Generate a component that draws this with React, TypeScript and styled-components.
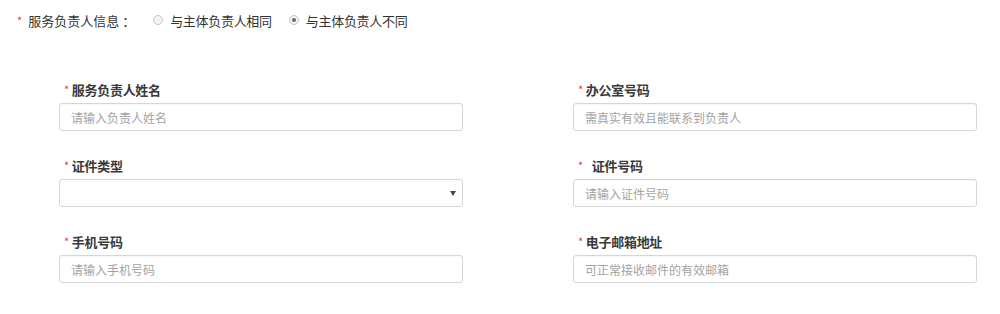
import React from "react";
import styled, { createGlobalStyle } from "styled-components";

const Global = createGlobalStyle`
  html, body { margin: 0; padding: 0; background: #fff; }
  body { font-family: "Noto Sans CJK SC", "Noto Sans", sans-serif; color: #333; }
  * { box-sizing: border-box; }
`;

const Page = styled.div`
  width: 1000px;
  height: 314px;
  background: #fff;
  overflow: hidden;
`;

const Header = styled.div`
  display: flex;
  align-items: center;
  height: 40px;
  padding-left: 17px;
  font-size: 13px;
  color: #333;
`;

const Star = styled.span<{ $gap?: number }>`
  color: #e4393c;
  font-size: 11px;
  font-weight: 400;
  margin-right: ${(p) => p.$gap ?? 3}px;
`;

const HeaderTitle = styled.span`
  margin-right: 18px;
`;

const Colon = styled.span`
  margin-left: 3px;
`;

const Option = styled.label`
  display: flex;
  align-items: center;
  margin-right: 17px;
  letter-spacing: -0.3px;
`;

const Radio = styled.span<{ $checked?: boolean }>`
  display: inline-flex;
  align-items: center;
  justify-content: center;
  width: 10px;
  height: 10px;
  border-radius: 50%;
  border: 1px solid #c4c4c4;
  background: #f4f4f4;
  margin-right: 7px;
  &::after {
    content: "";
    display: ${(p) => (p.$checked ? "block" : "none")};
    width: 4px;
    height: 4px;
    border-radius: 50%;
    background: #666;
  }
`;

const Form = styled.div`
  display: grid;
  grid-template-columns: 404px 404px;
  column-gap: 110px;
  row-gap: 24px;
  padding: 39px 0 0 59px;
`;

const Field = styled.div`
  display: flex;
  flex-direction: column;
  gap: 4px;
`;

const Label = styled.div`
  display: flex;
  align-items: center;
  height: 20px;
  padding-left: 5px;
  font-size: 13px;
  font-weight: 600;
  color: #3a3a3a;
  letter-spacing: -0.3px;
`;

const Input = styled.input`
  width: 404px;
  height: 28px;
  border: 1px solid #d6d6d6;
  border-radius: 3px;
  padding: 0 11px;
  font-family: inherit;
  font-size: 12px;
  color: #333;
  background: #fff;
  outline: none;
  box-shadow: inset 0 1px 1px rgba(0, 0, 0, 0.03);
  &::placeholder { color: #a3a3a3; }
`;

const SelectBox = styled.div`
  display: flex;
  align-items: center;
  justify-content: flex-end;
  width: 404px;
  height: 28px;
  border: 1px solid #d6d6d6;
  border-radius: 3px;
  padding-right: 6px;
  background: #fff;
`;

const Arrow = styled.span`
  width: 0;
  height: 0;
  border-left: 3px solid transparent;
  border-right: 3px solid transparent;
  border-top: 5px solid #444;
  margin-top: 1px;
`;

type F = { label: string; ph?: string; select?: boolean; gap?: number };

const fields: F[] = [
  { label: "服务负责人姓名", ph: "请输入负责人姓名" },
  { label: "办公室号码", ph: "需真实有效且能联系到负责人" },
  { label: "证件类型", select: true },
  { label: "证件号码", ph: "请输入证件号码", gap: 9 },
  { label: "手机号码", ph: "请输入手机号码" },
  { label: "电子邮箱地址", ph: "可正常接收邮件的有效邮箱" },
];

export default function App() {
  return (
    <Page>
      <Global />
      <Header>
        <Star $gap={6}>*</Star>
        <HeaderTitle>
          服务负责人信息<Colon>：</Colon>
        </HeaderTitle>
        <Option>
          <Radio />
          与主体负责人相同
        </Option>
        <Option>
          <Radio $checked />
          与主体负责人不同
        </Option>
      </Header>
      <Form>
        {fields.map((f) => (
          <Field key={f.label}>
            <Label>
              <Star $gap={f.gap}>*</Star>
              {f.label}
            </Label>
            {f.select ? (
              <SelectBox>
                <Arrow />
              </SelectBox>
            ) : (
              <Input placeholder={f.ph} />
            )}
          </Field>
        ))}
      </Form>
    </Page>
  );
}
